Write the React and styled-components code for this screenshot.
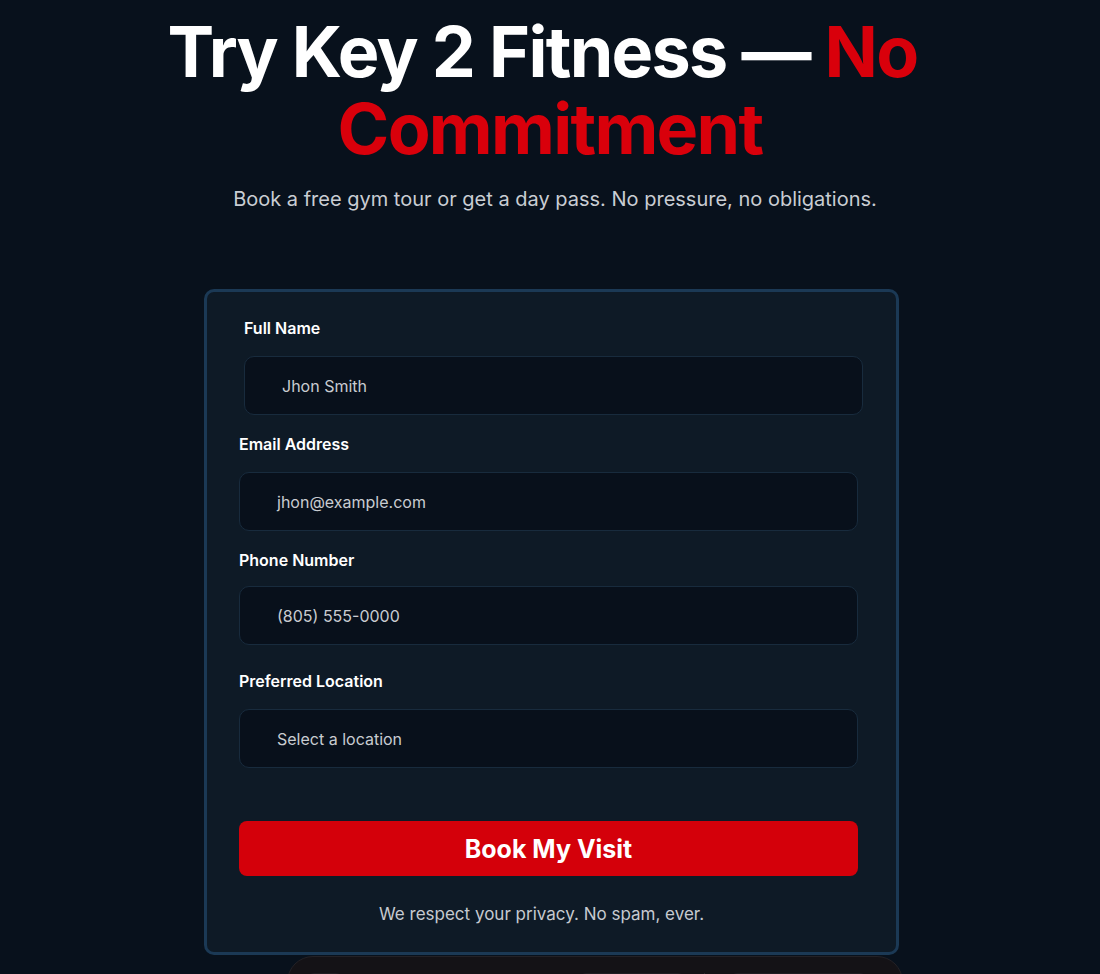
import React from "react";
import styled, { createGlobalStyle } from "styled-components";

const GlobalStyle = createGlobalStyle`
  html, body {
    margin: 0;
    padding: 0;
    background: #08111c;
  }
  body {
    font-family: Inter, "Noto Sans", sans-serif;
    color: #ffffff;
  }
`;

const Page = styled.div`
  min-height: 974px;
  display: flex;
  flex-direction: column;
  align-items: center;
  padding-top: 13px;
  overflow: hidden;
`;

const Title = styled.h1`
  margin: 0;
  width: 900px;
  font-size: 70px;
  line-height: 77px;
  font-weight: 700;
  letter-spacing: -1.7px;
  text-align: center;
  color: #ffffff;
`;

const Accent = styled.span`
  color: #d9000b;
`;

const Subtitle = styled.p`
  margin: 18px 0 0;
  padding-left: 10px;
  font-size: 20px;
  line-height: 28px;
  color: #c9cdd3;
  text-align: center;
`;

const Card = styled.form`
  margin: 76px 0 0 3px;
  width: 695px;
  box-sizing: border-box;
  padding: 24px 38px 26px 32px;
  background: #0e1a26;
  border: 3px solid #1b3955;
  border-radius: 10px;
  display: flex;
  flex-direction: column;
`;

const Field = styled.div`
  display: flex;
  flex-direction: column;
  margin-top: ${p => p.$top || 0}px;
  margin-left: ${p => p.$shift || 0}px;
  margin-right: ${p => -(p.$shift || 0)}px;
`;

const Label = styled.label`
  font-size: 16px;
  line-height: 24px;
  font-weight: 600;
  color: #ffffff;
  margin-bottom: ${p => p.$gap}px;
`;

const Input = styled.div`
  height: 59px;
  box-sizing: border-box;
  display: flex;
  align-items: center;
  padding-left: 37px;
  background: #08101b;
  border: 1px solid #182b3d;
  border-radius: 10px;
  font-size: 16px;
  color: #c9ccd1;
`;

const Button = styled.button`
  margin-top: 53px;
  height: 55px;
  border: none;
  border-radius: 8px;
  background: #d4000a;
  color: #ffffff;
  font-family: Inter, "Noto Sans", sans-serif;
  font-size: 25px;
  font-weight: 700;
  cursor: pointer;
`;

const Note = styled.p`
  margin: 26px 14px 0 0;
  font-size: 17px;
  line-height: 24px;
  text-align: center;
  color: #c6cad0;
`;

const Preview = styled.div`
  margin: 1px 0 0 90px;
  width: 616px;
  height: 60px;
  box-sizing: border-box;
  background: #141216;
  border: 1px solid #232126;
  border-radius: 26px 26px 0 0;
  display: flex;
  align-items: flex-start;
  padding: 16px 30px 0 20px;
  gap: 12px;
`;

const Chip = styled.div`
  width: ${p => p.$w}px;
  height: 20px;
  margin-left: ${p => p.$ml || 0}px;
  border-radius: 6px;
  background: #1f1d22;
`;

const Divider = styled.div`
  width: 1px;
  height: 20px;
  background: #2a282d;
  margin-left: 8px;
`;

const fields = [
  { label: "Full Name", value: "Jhon Smith", top: 0, gap: 16, shift: 5 },
  { label: "Email Address", value: "jhon@example.com", top: 17, gap: 16 },
  { label: "Phone Number", value: "(805) 555-0000", top: 17, gap: 14 },
  { label: "Preferred Location", value: "Select a location", top: 24, gap: 16 }
];

export default function App() {
  return (
    <>
      <GlobalStyle />
      <Page>
        <Title>
          Try Key 2 Fitness — <Accent>No{"\u00a0"}</Accent>
          <br />
          <Accent>Commitment</Accent>
        </Title>
        <Subtitle>
          Book a free gym tour or get a day pass. No pressure, no obligations.
        </Subtitle>
        <Card onSubmit={e => e.preventDefault()}>
          {fields.map(f => (
            <Field key={f.label} $top={f.top} $shift={f.shift}>
              <Label $gap={f.gap}>{f.label}</Label>
              <Input>{f.value}</Input>
            </Field>
          ))}
          <Button type="submit">Book My Visit</Button>
          <Note>We respect your privacy. No spam, ever.</Note>
        </Card>
        <Preview>
          <Chip $w={34} />
          <Chip $w={104} $ml={226} />
          <Divider />
          <Chip $w={135} $ml={14} />
        </Preview>
      </Page>
    </>
  );
}
